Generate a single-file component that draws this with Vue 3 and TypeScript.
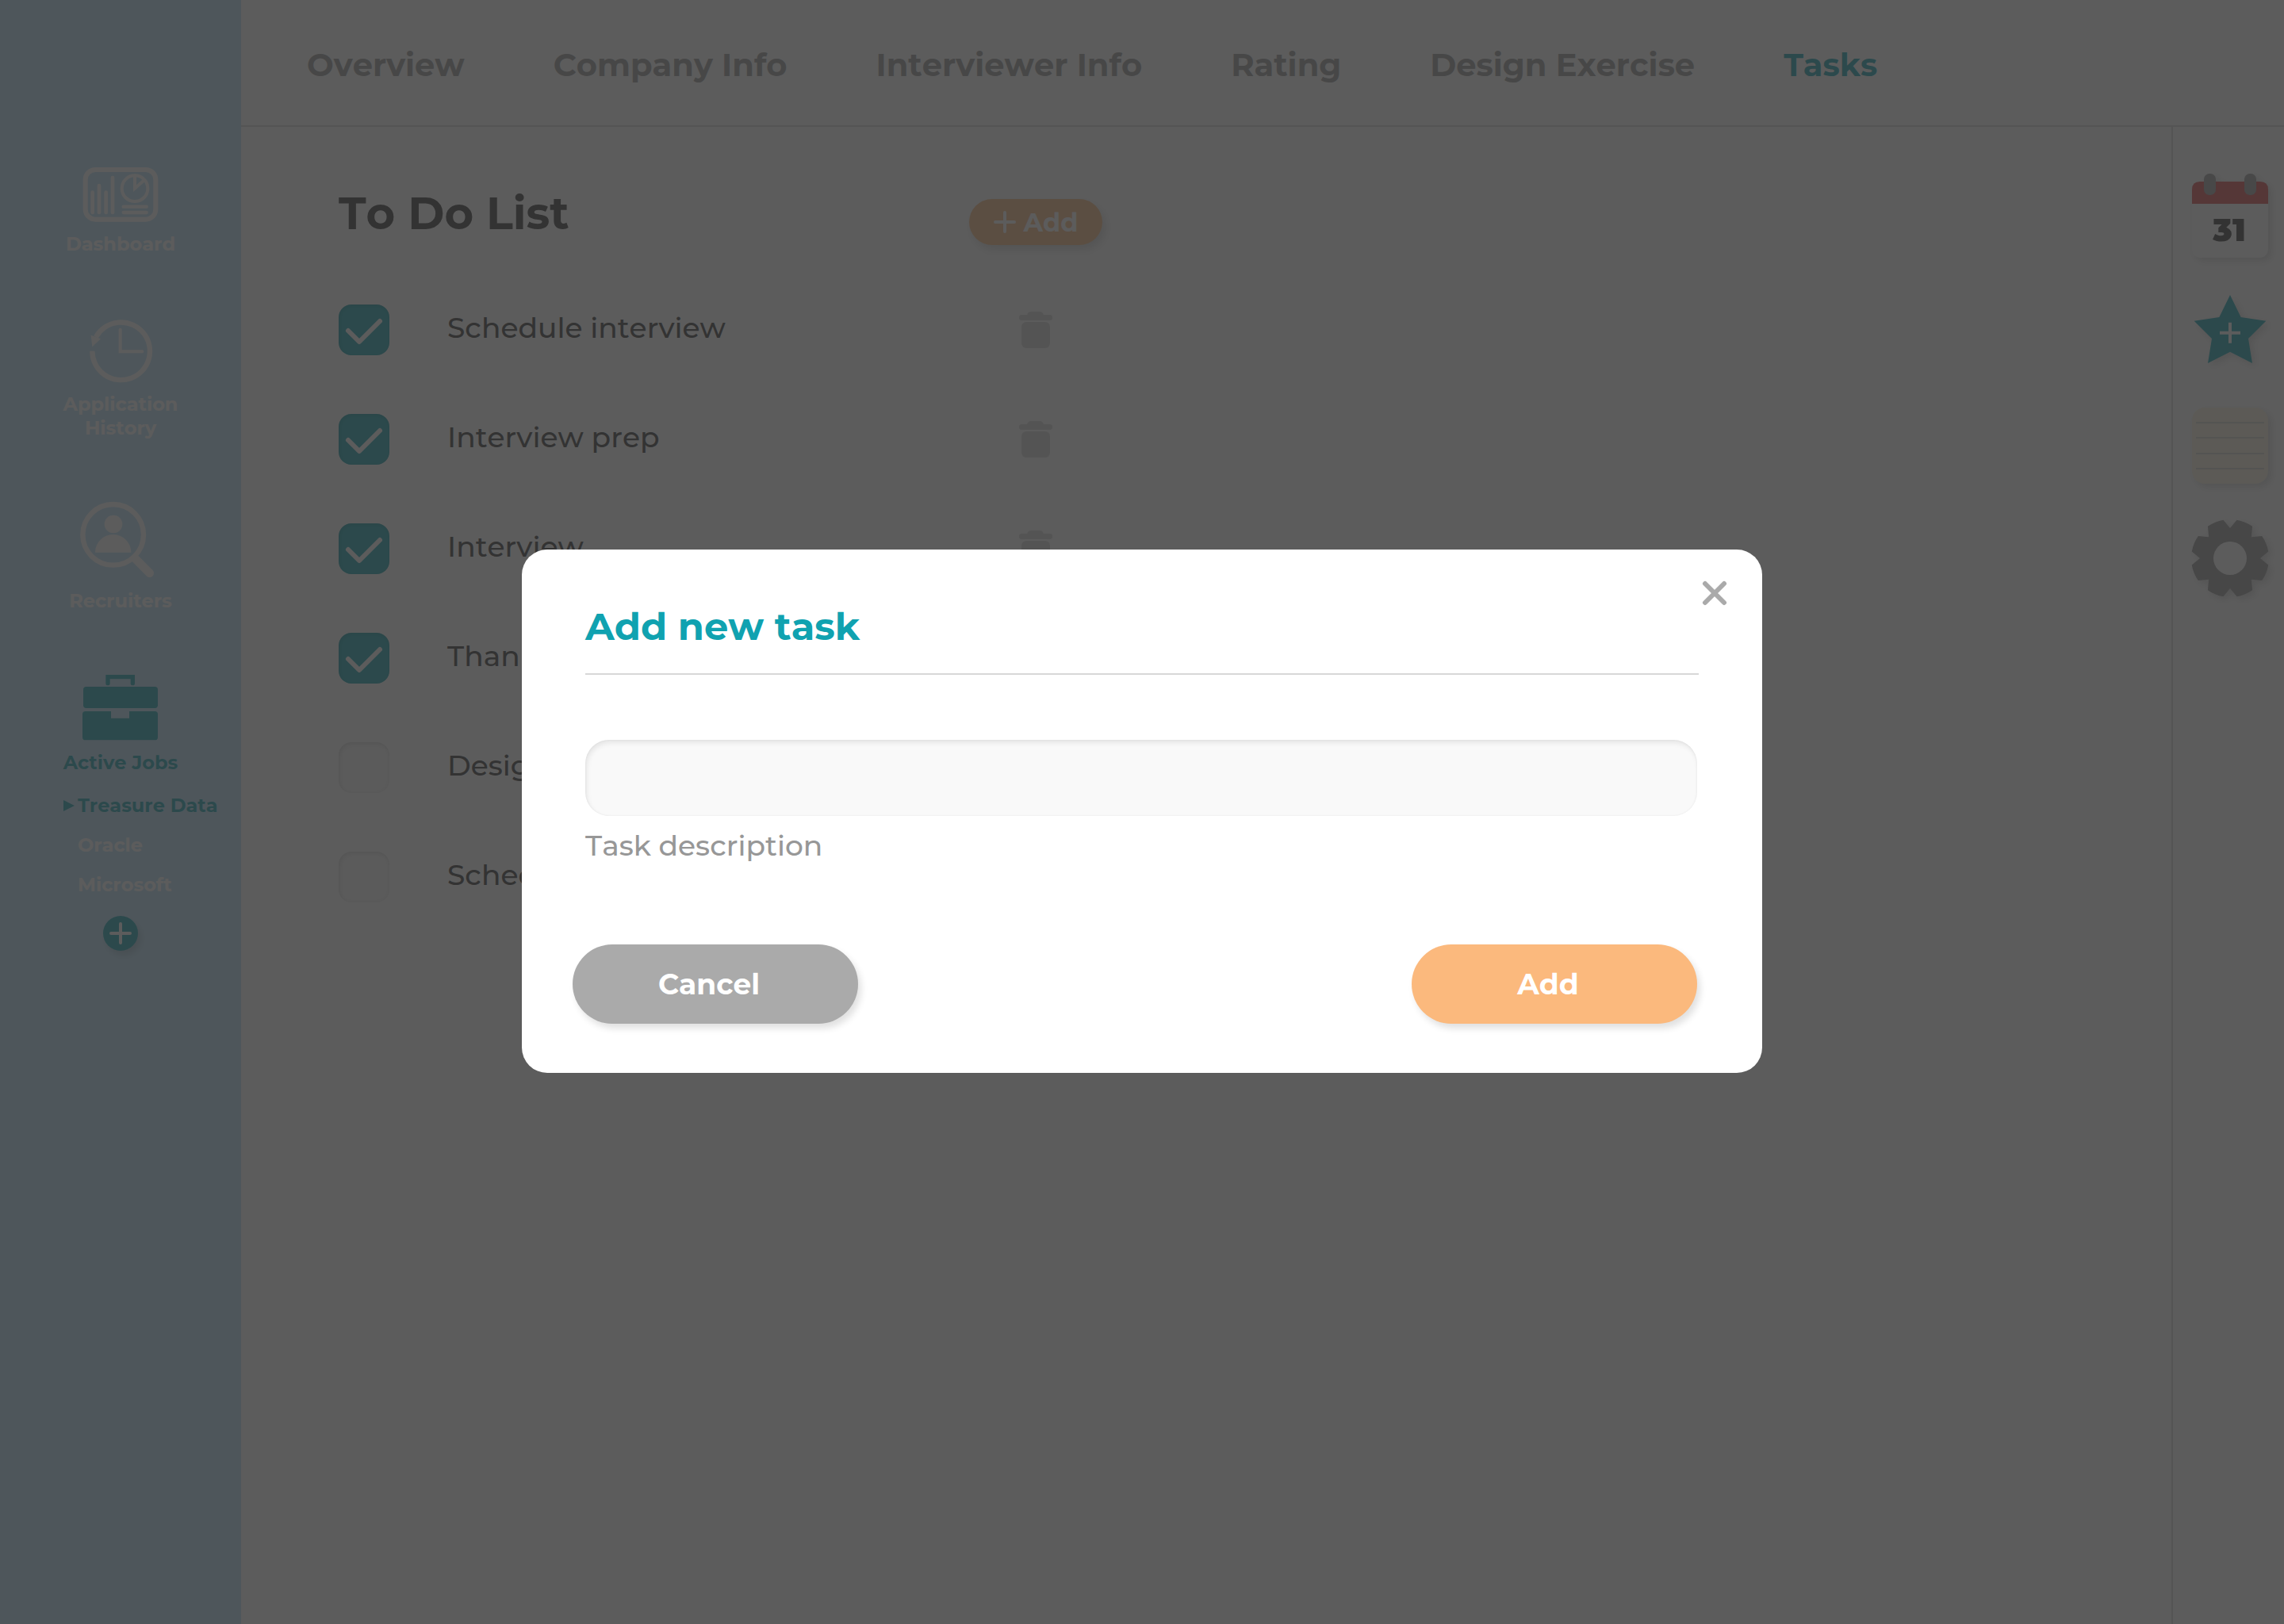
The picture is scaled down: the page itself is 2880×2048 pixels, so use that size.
<script setup lang="ts">
import { ref } from 'vue'

interface Task {
  label: string
  done: boolean
}

const tabs: string[] = ['Overview', 'Company Info', 'Interviewer Info', 'Rating', 'Design Exercise', 'Tasks']
const activeTab = ref('Tasks')

const jobs: string[] = ['Treasure Data', 'Oracle', 'Microsoft']
const activeJob = ref('Treasure Data')

const tasks = ref<Task[]>([
  { label: 'Schedule interview', done: true },
  { label: 'Interview prep', done: true },
  { label: 'Interview', done: true },
  { label: 'Thanks', done: true },
  { label: 'Design', done: false },
  { label: 'Schedule', done: false },
])

const modalOpen = ref(true)
const description = ref('')

function closeModal(): void {
  modalOpen.value = false
  description.value = ''
}

function addTask(): void {
  const label = description.value.trim()
  if (label) tasks.value.push({ label, done: false })
  closeModal()
}

function removeTask(index: number): void {
  tasks.value.splice(index, 1)
}

// Outline of an eight-tooth gear with V-shaped notches, centred on 49,49.
function gearPath(teeth: number, outer: number, notch: number, halfAngle: number): string {
  const at = (radius: number, degrees: number): string => {
    const a = (degrees * Math.PI) / 180
    return `${(49 + radius * Math.sin(a)).toFixed(2)} ${(49 - radius * Math.cos(a)).toFixed(2)}`
  }
  const step = 360 / teeth
  let d = `M${at(notch, 0)}`
  for (let i = 0; i < teeth; i++) {
    const from = i * step
    d += `L${at(outer, from + halfAngle)}A${outer} ${outer} 0 0 1 ${at(outer, from + step - halfAngle)}L${at(notch, from + step)}`
  }
  return d + 'Z'
}

const gear = gearPath(8, 49, 38, 10)
</script>

<template>
  <div class="app">
    <aside class="sidebar">
      <nav class="menu" aria-label="Main">
        <a class="menu-item" href="#dashboard">
          <svg class="line-icon" width="96" height="72" viewBox="312 84 288 216" aria-hidden="true">
            <rect x="323" y="102" width="266" height="188" rx="38" stroke-width="18" />
            <path d="M350 188V264M375 162V264M401 188V264M426 132V264" stroke-width="14" />
            <circle cx="510" cy="173" r="49" stroke-width="12" />
            <path d="M545 142L510 173V126" stroke-width="12" stroke-linecap="butt" />
            <path d="M467 242H554M467 264H554" stroke-width="13" />
          </svg>
          <span>Dashboard</span>
        </a>
        <a class="menu-item" href="#history">
          <svg class="line-icon" width="80" height="80" viewBox="336 666 240 240" aria-hidden="true">
            <path d="M349 788A109 109 0 1 0 363 735" stroke-width="19" stroke-linecap="butt" />
            <path class="solid" d="M344 728L381 742L349 772Z" />
            <path d="M455 707V790H538" stroke-width="12" />
          </svg>
          <span>Application<br />History</span>
        </a>
        <a class="menu-item" href="#recruiters">
          <svg class="line-icon" width="96" height="96" viewBox="312 102 288 288" aria-hidden="true">
            <circle cx="428" cy="223" r="115" stroke-width="19" />
            <circle class="solid" cx="429" cy="183" r="34" />
            <path class="solid" d="M360 290A68 68 0 0 1 496 290Z" />
            <path d="M514 316L566 368" stroke-width="32" />
          </svg>
          <span>Recruiters</span>
        </a>
        <a class="menu-item active" href="#jobs">
          <svg class="line-icon" width="96" height="82" viewBox="312 756 288 246" aria-hidden="true">
            <path d="M408 785V761H502V785" stroke-width="16" />
            <rect class="solid" x="315" y="798" width="282" height="81" rx="11" />
            <path class="solid" d="M323 891H420V917H489V891H586Q597 891 597 902V989Q597 1000 586 1000H323Q312 1000 312 989V902Q312 891 323 891Z" />
          </svg>
          <span>Active Jobs</span>
        </a>
      </nav>
      <ul class="jobs">
        <li v-for="job in jobs" :key="job">
          <a class="job" :class="{ active: job === activeJob }" href="#jobs" @click="activeJob = job">
            <svg class="marker" width="14" height="14" viewBox="0 0 14 14" aria-hidden="true">
              <path d="M0 0L14 7L0 14Z" />
            </svg>
            {{ job }}
          </a>
        </li>
      </ul>
      <button class="add-job" type="button" aria-label="Add job">
        <svg width="28" height="28" viewBox="0 0 28 28" aria-hidden="true">
          <path d="M14 2V26M2 14H26" />
        </svg>
      </button>
    </aside>

    <div class="page">
      <header class="topbar">
        <nav class="tabs" aria-label="Job sections">
          <a
            v-for="tab in tabs"
            :key="tab"
            class="tab"
            :class="{ active: tab === activeTab }"
            href="#tasks"
            @click="activeTab = tab"
          >{{ tab }}</a>
        </nav>
      </header>

      <div class="body">
        <main class="content">
          <section class="todo">
            <div class="todo-head">
              <h1>To Do List</h1>
              <button class="add-pill" type="button" @click="modalOpen = true">
                <svg width="28" height="28" viewBox="0 0 28 28" aria-hidden="true">
                  <path d="M14 2V26M2 14H26" />
                </svg>
                Add
              </button>
            </div>
            <ul class="tasks">
              <li v-for="(task, i) in tasks" :key="task.label" class="task">
                <label class="task-label">
                  <span class="box">
                    <input v-model="task.done" type="checkbox" />
                    <svg v-if="task.done" class="tick" width="64" height="64" viewBox="0 0 64 64" aria-hidden="true">
                      <path d="M12 33L26 47L52 21" />
                    </svg>
                  </span>
                  <span class="task-text">{{ task.label }}</span>
                </label>
                <button class="trash" type="button" :aria-label="'Delete ' + task.label" @click="removeTask(i)">
                  <svg width="42" height="46" viewBox="0 0 42 46" aria-hidden="true">
                    <rect x="10" y="0" width="21" height="10" rx="5" />
                    <rect x="0" y="4" width="42" height="7" rx="3" />
                    <rect x="3" y="13" width="36" height="33" rx="6" />
                  </svg>
                </button>
              </li>
            </ul>
          </section>
        </main>

        <aside class="rail">
          <button class="tool" type="button" aria-label="Calendar">
            <svg width="96" height="108" viewBox="0 0 96 108" aria-hidden="true">
              <rect x="0" y="10" width="96" height="96" rx="10" fill="#fff" />
              <path d="M0 38V20Q0 10 10 10H86Q96 10 96 20V38Z" fill="#d94848" />
              <rect x="15" y="0" width="15" height="27" rx="7" fill="#999" />
              <rect x="66" y="0" width="15" height="27" rx="7" fill="#999" />
              <text x="47" y="85" text-anchor="middle">31</text>
            </svg>
          </button>
          <button class="tool" type="button" aria-label="Add to favourites">
            <svg width="96" height="96" viewBox="132 570 288 288" aria-hidden="true">
              <path d="M276 573L317 657L412 671L345 738L360 831L276 788L192 831L207 738L140 671L235 657Z" fill="#10a2b0" />
              <path d="M276 677V755M237 716H315" fill="none" stroke="#fff" stroke-width="12" />
            </svg>
          </button>
          <button class="tool" type="button" aria-label="Notes">
            <svg width="96" height="100" viewBox="0 0 96 100" aria-hidden="true">
              <rect x="0" y="3" width="96" height="96" rx="16" fill="#fcf6e0" />
              <path d="M5 22H91M5 41H91M5 61H91M5 80H91" fill="none" stroke="#d8d4cc" stroke-width="2" />
            </svg>
          </button>
          <button class="tool" type="button" aria-label="Settings">
            <svg width="98" height="98" viewBox="0 0 98 98" aria-hidden="true">
              <path :d="gear" fill="#979797" />
              <circle cx="49" cy="49" r="21" fill="#fff" />
            </svg>
          </button>
        </aside>
      </div>
    </div>

    <div v-if="modalOpen" class="overlay">
      <form class="modal" role="dialog" aria-modal="true" aria-labelledby="modal-title" @submit.prevent="addTask">
        <button class="close" type="button" aria-label="Close" @click="closeModal">
          <svg width="32" height="32" viewBox="0 0 32 32" aria-hidden="true">
            <path d="M4 4L28 28M28 4L4 28" />
          </svg>
        </button>
        <h2 id="modal-title">Add new task</h2>
        <div class="field">
          <input id="task-description" v-model="description" type="text" />
          <label for="task-description">Task description</label>
        </div>
        <div class="actions">
          <button class="btn cancel" type="button" @click="closeModal">Cancel</button>
          <button class="btn confirm" type="submit">Add</button>
        </div>
      </form>
    </div>
  </div>
</template>

<style>
body {
  margin: 0;
  background: #fff;
}
</style>

<style scoped>
.app {
  display: flex;
  min-height: 100vh;
  background: #fff;
  color: #333;
  font-family: Montserrat, Inter, 'Liberation Sans', sans-serif;
  font-kerning: none;
}

.app * {
  box-sizing: border-box;
}

a {
  color: inherit;
  text-decoration: none;
}

ul {
  margin: 0;
  padding: 0;
  list-style: none;
}

button {
  padding: 0;
  border: 0;
  background: none;
  font-family: inherit;
  font-kerning: none;
  cursor: pointer;
}

svg {
  display: block;
  overflow: visible;
}

.sidebar {
  display: flex;
  flex-direction: column;
  align-items: center;
  flex: none;
  width: 304px;
  padding-top: 208px;
  background: #bae2fa;
  color: #fff;
  font-size: 24px;
  font-weight: 700;
  line-height: 30px;
}

.menu {
  display: flex;
  flex-direction: column;
  gap: 79px;
}

.menu-item {
  display: flex;
  flex-direction: column;
  align-items: center;
  gap: 13px;
  text-align: center;
}

.menu-item.active,
.job.active {
  color: #10a2b0;
}

.line-icon {
  fill: none;
  stroke: currentColor;
  stroke-linecap: round;
}

.line-icon .solid {
  fill: currentColor;
  stroke: none;
}

.jobs {
  display: flex;
  flex-direction: column;
  align-self: stretch;
  gap: 20px;
  margin-top: 24px;
  padding-left: 80px;
}

.job {
  display: flex;
  align-items: center;
  gap: 4px;
  white-space: nowrap;
}

.marker {
  visibility: hidden;
  fill: currentColor;
}

.job.active .marker {
  visibility: visible;
}

.add-job {
  display: flex;
  align-items: center;
  justify-content: center;
  width: 44px;
  height: 44px;
  margin-top: 24px;
  border-radius: 50%;
  background: #10a2b0;
  box-shadow: 4px 6px 8px rgba(0, 0, 0, 0.16);
}

.add-job svg,
.add-pill svg {
  fill: none;
  stroke: #fff;
  stroke-width: 4;
  stroke-linecap: round;
}

.page {
  display: flex;
  flex: 1;
  flex-direction: column;
  min-width: 0;
}

.topbar {
  display: flex;
  align-items: center;
  height: 160px;
  padding: 6px 83px 0;
  border-bottom: 2px solid #d8d8d8;
}

.tabs {
  display: flex;
  gap: 112px;
}

.tab {
  color: #979797;
  font-size: 40px;
  font-weight: 700;
  line-height: 52px;
  white-space: nowrap;
}

.tab.active {
  color: #10a2b0;
}

.body {
  display: flex;
  flex: 1;
}

.content {
  flex: 1;
  min-width: 0;
  padding: 74px 123px;
}

.todo {
  max-width: 963px;
}

.todo-head {
  display: flex;
  align-items: flex-end;
  justify-content: space-between;
  margin-bottom: 75px;
}

h1 {
  margin: 0;
  padding-bottom: 5px;
  font-size: 56px;
  font-weight: 700;
  line-height: 70px;
}

.add-pill {
  display: flex;
  align-items: center;
  justify-content: center;
  gap: 10px;
  width: 168px;
  height: 58px;
  border-radius: 29px;
  background: #fbb97d;
  box-shadow: 4px 6px 12px rgba(0, 0, 0, 0.16);
  color: #fff;
  font-size: 32px;
  font-weight: 700;
}

.tasks {
  display: flex;
  flex-direction: column;
  gap: 74px;
}

.task {
  display: flex;
  align-items: center;
}

.task-label {
  display: flex;
  flex: 1;
  gap: 73px;
  font-size: 36px;
  font-weight: 500;
  line-height: 58px;
}

.box {
  position: relative;
  flex: none;
  width: 64px;
  height: 64px;
}

.box input {
  display: block;
  width: 64px;
  height: 64px;
  margin: 0;
  border-radius: 16px;
  appearance: none;
  background: #f8f8f8;
  box-shadow: inset 2px 3px 5px rgba(0, 0, 0, 0.08), inset 0 0 5px rgba(0, 0, 0, 0.08);
}

.box input:checked {
  background: #10a2b0;
}

.tick {
  position: absolute;
  inset: 0;
  fill: none;
  stroke: #fff;
  stroke-width: 6;
  stroke-linecap: round;
  stroke-linejoin: round;
  pointer-events: none;
}

.trash {
  display: flex;
  justify-content: center;
  width: 168px;
  fill: #d8d8d8;
}

.rail {
  display: flex;
  flex: none;
  flex-direction: column;
  align-items: center;
  gap: 44px;
  width: 142px;
  padding: 59px 0 0 4px;
  border-left: 2px solid #d8d8d8;
}

.tool {
  filter: drop-shadow(4px 4px 5px rgba(0, 0, 0, 0.16));
}

.tool text {
  fill: #333;
  font-size: 40px;
  font-weight: 900;
}

.overlay {
  position: fixed;
  inset: 0;
  display: flex;
  align-items: center;
  justify-content: center;
  padding: 32px 32px 34px;
  background: rgba(51, 51, 51, 0.8);
}

.modal {
  position: relative;
  display: flex;
  flex-direction: column;
  width: 100%;
  max-width: 1564px;
  padding: 67px 80px 62px;
  border-radius: 32px;
  background: #fff;
}

.close {
  position: absolute;
  top: 39px;
  right: 44px;
}

.close svg {
  fill: none;
  stroke: #aaa;
  stroke-width: 6;
  stroke-linecap: round;
}

h2 {
  margin: 0 0 82px;
  padding-bottom: 29px;
  border-bottom: 2px solid #d8d8d8;
  color: #10a2b0;
  font-size: 48px;
  font-weight: 700;
  line-height: 60px;
}

.field {
  display: flex;
  flex-direction: column;
  gap: 14px;
  margin: 0 2px 102px 0;
}

.field input {
  width: 100%;
  height: 96px;
  padding: 0 32px;
  border: 0;
  border-radius: 30px;
  outline: none;
  background: #f9f9f9;
  box-shadow: inset 2px 4px 6px rgba(0, 0, 0, 0.08), inset 0 0 3px rgba(0, 0, 0, 0.06);
  color: #333;
  font-family: inherit;
  font-size: 36px;
}

.field label {
  color: #979797;
  font-size: 36px;
  font-weight: 500;
  line-height: 46px;
}

.actions {
  display: flex;
  justify-content: space-between;
  margin: 0 2px 0 -16px;
}

.btn {
  width: 360px;
  height: 100px;
  padding-right: 16px;
  border-radius: 50px;
  box-shadow: 4px 6px 8px rgba(0, 0, 0, 0.12);
  color: #fff;
  font-size: 36px;
  font-weight: 700;
}

.cancel {
  background: #aaa;
}

.confirm {
  background: #fbb97d;
}
</style>
